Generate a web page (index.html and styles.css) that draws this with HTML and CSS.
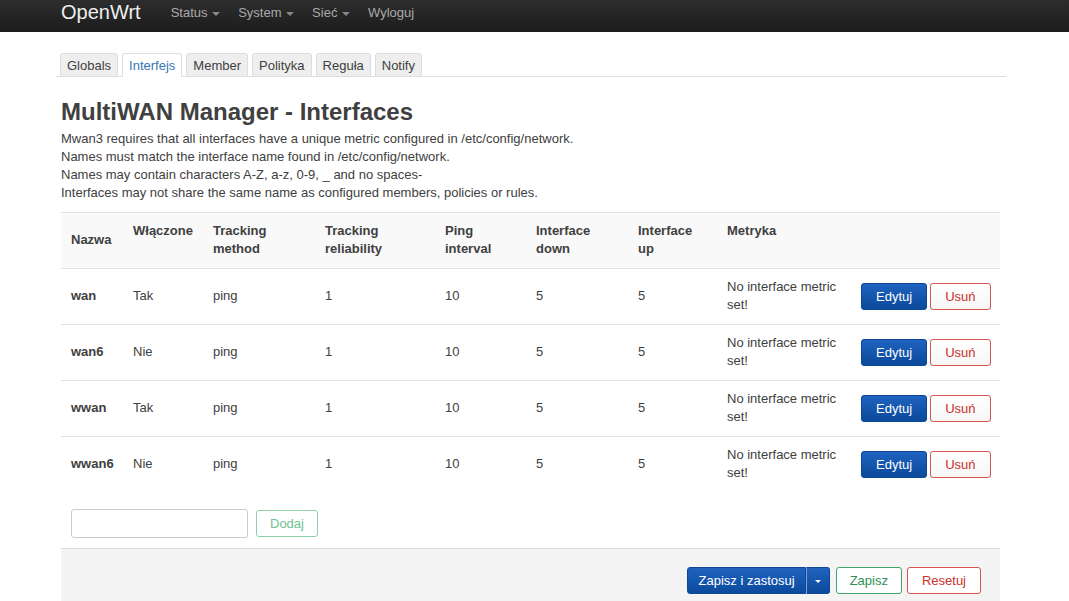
FILE: index.html
```html
<!DOCTYPE html>
<html lang="pl">
<head>
    <meta charset="UTF-8">
    <meta name="viewport" content="width=device-width, initial-scale=1.0">
    <title>MultiWAN Manager - Interfaces</title>
    <link rel="stylesheet" href="styles.css">
</head>
<body>
    <header class="navbar">
        <a class="brand">OpenWrt</a>
        <ul class="nav">
            <li class="dropdown">Status <span class="caret"></span></li>
            <li class="dropdown">System <span class="caret"></span></li>
            <li class="dropdown">Sieć <span class="caret"></span></li>
            <li>Wyloguj</li>
        </ul>
    </header>

    <div class="main">
        <ul class="tabs">
            <li>Globals</li>
            <li class="active">Interfejs</li>
            <li>Member</li>
            <li>Polityka</li>
            <li>Reguła</li>
            <li>Notify</li>
        </ul>

        <h2>MultiWAN Manager - Interfaces</h2>
        <div class="desc">
            Mwan3 requires that all interfaces have a unique metric configured in /etc/config/network.<br>
            Names must match the interface name found in /etc/config/network.<br>
            Names may contain characters A-Z, a-z, 0-9, _ and no spaces-<br>
            Interfaces may not share the same name as configured members, policies or rules.
        </div>

        <div class="section">
            <table class="iface-table">
                <colgroup>
                    <col style="width:62px">
                    <col style="width:80px">
                    <col style="width:112px">
                    <col style="width:120px">
                    <col style="width:91px">
                    <col style="width:102px">
                    <col style="width:89px">
                    <col style="width:134px">
                    <col>
                </colgroup>
                <thead>
                    <tr>
                        <th class="name-head">Nazwa</th>
                        <th>Włączone</th>
                        <th>Tracking method</th>
                        <th>Tracking reliability</th>
                        <th>Ping interval</th>
                        <th>Interface down</th>
                        <th>Interface up</th>
                        <th>Metryka</th>
                        <th></th>
                    </tr>
                </thead>
                <tbody>
                    <tr>
                        <td class="name">wan</td>
                        <td>Tak</td>
                        <td>ping</td>
                        <td>1</td>
                        <td>10</td>
                        <td>5</td>
                        <td>5</td>
                        <td class="metric">No interface metric set!</td>
                        <td class="actions"><button class="btn btn-edit">Edytuj</button><button class="btn btn-remove">Usuń</button></td>
                    </tr>
                    <tr>
                        <td class="name">wan6</td>
                        <td>Nie</td>
                        <td>ping</td>
                        <td>1</td>
                        <td>10</td>
                        <td>5</td>
                        <td>5</td>
                        <td class="metric">No interface metric set!</td>
                        <td class="actions"><button class="btn btn-edit">Edytuj</button><button class="btn btn-remove">Usuń</button></td>
                    </tr>
                    <tr>
                        <td class="name">wwan</td>
                        <td>Tak</td>
                        <td>ping</td>
                        <td>1</td>
                        <td>10</td>
                        <td>5</td>
                        <td>5</td>
                        <td class="metric">No interface metric set!</td>
                        <td class="actions"><button class="btn btn-edit">Edytuj</button><button class="btn btn-remove">Usuń</button></td>
                    </tr>
                    <tr>
                        <td class="name">wwan6</td>
                        <td>Nie</td>
                        <td>ping</td>
                        <td>1</td>
                        <td>10</td>
                        <td>5</td>
                        <td>5</td>
                        <td class="metric">No interface metric set!</td>
                        <td class="actions"><button class="btn btn-edit">Edytuj</button><button class="btn btn-remove">Usuń</button></td>
                    </tr>
                </tbody>
            </table>

            <div class="add-row">
                <input type="text" class="add-input">
                <button class="btn btn-add">Dodaj</button>
            </div>

            <div class="page-actions">
                <div class="split">
                    <button class="btn btn-apply">Zapisz i zastosuj</button><button class="btn btn-apply btn-caret"><span class="caret"></span></button>
                </div>
                <button class="btn btn-save">Zapisz</button>
                <button class="btn btn-reset">Resetuj</button>
            </div>
        </div>
    </div>
</body>
</html>
```

FILE: styles.css
```css
body {
    margin: 0;
    font-family: 'Liberation Sans', Arial, sans-serif;
    font-size: 13px;
    color: #404040;
    background: #fff;
}

.navbar {
    height: 32px;
    background: linear-gradient(#2d2d2d, #1c1c1c);
    display: flex;
    align-items: flex-start;
    padding-left: 61px;
}

.brand {
    color: #eee;
    font-size: 20px;
    line-height: 25px;
    margin-right: 21px;
}

.nav {
    list-style: none;
    margin: 0;
    padding: 0;
    display: flex;
}

.nav li {
    color: #aaa;
    line-height: 26px;
    padding: 0 9px;
}

.nav .caret {
    display: inline-block;
    margin-left: 1px;
    vertical-align: middle;
    border-top: 4px solid #888;
    border-left: 4px solid transparent;
    border-right: 4px solid transparent;
}

.main {
    margin: 0 63px 0 56px;
    padding-top: 21px;
}

.tabs {
    list-style: none;
    margin: 0;
    padding: 0 0 0 4px;
    display: flex;
    border-bottom: 1px solid #ddd;
}

.tabs li {
    background: #eee;
    border: 1px solid #ddd;
    border-radius: 3px 3px 0 0;
    padding: 4px 6px 3px;
    line-height: 15px;
    margin: 0 4px -1px 0;
    color: #404040;
}

.tabs li.active {
    background: #fff;
    border-bottom-color: #fff;
    color: #3577b6;
}

h2 {
    font-size: 24px;
    line-height: 28px;
    margin: 21px 0 4px 5px;
    color: #404040;
}

.desc {
    margin-left: 5px;
    line-height: 18px;
}

.section {
    margin: 10px 6px 0 5px;
}

.iface-table {
    width: 100%;
    border-collapse: collapse;
    table-layout: fixed;
}

.iface-table th {
    background: #f9f9f9;
    border-top: 1px solid #e2e2e2;
    font-weight: bold;
    text-align: left;
    vertical-align: top;
    line-height: 18px;
    padding: 9px 10px 10px;
    height: 36px;
}

.iface-table th.name-head {
    vertical-align: middle;
}

.iface-table td {
    border-top: 1px solid #e2e2e2;
    line-height: 18px;
    padding: 9px 10px 10px;
    height: 36px;
    vertical-align: middle;
}

.iface-table td.name {
    font-weight: bold;
}

.iface-table td.metric {
    padding-right: 10px;
}

.actions {
    white-space: nowrap;
}

.btn {
    font-family: 'Liberation Sans', Arial, sans-serif;
    font-size: 13px;
    height: 27px;
    line-height: 25px;
    padding: 0 14px;
    border-radius: 3px;
    border: 1px solid transparent;
    background: #fff;
    cursor: pointer;
}

.btn-edit {
    background: linear-gradient(#1f63bf, #0b4a9c);
    border-color: #0d4795;
    color: #fff;
    margin-right: 3px;
}

.btn-remove {
    background: linear-gradient(#fff, #f6f6f6);
    border-color: #d9534f;
    color: #c9302c;
}

.add-row {
    display: flex;
    align-items: center;
    padding: 17px 10px 10px;
}

.add-input {
    width: 177px;
    height: 29px;
    box-sizing: border-box;
    border: 1px solid #ccc;
    border-radius: 3px;
    margin: 0 8px 0 0;
}

.btn-add {
    padding: 0 13px;
    border-color: #8fcfa9;
    color: #6fbf92;
}

.page-actions {
    background: #f4f4f4;
    border-top: 1px solid #dedede;
    padding: 18px 19px 10px;
    display: flex;
    justify-content: flex-end;
    gap: 5px;
}

.split {
    display: flex;
    margin-right: 1px;
}

.btn-apply {
    background: linear-gradient(#1f63bf, #0b4a9c);
    border-color: #0d4795;
    color: #fff;
    padding: 0 10px 0 11px;
    border-radius: 3px 0 0 3px;
}

.btn-caret {
    padding: 0 8px;
    border-left: 1px solid #7d9fd0;
    border-radius: 0 3px 3px 0;
}

.btn-caret .caret {
    display: inline-block;
    vertical-align: middle;
    border-top: 3px solid #fff;
    border-left: 3px solid transparent;
    border-right: 3px solid transparent;
}

.btn-save {
    padding: 0 13px;
    border-color: #3fa56a;
    color: #2f8f57;
}

.btn-reset {
    border-color: #d9534f;
    color: #c9302c;
}
```
